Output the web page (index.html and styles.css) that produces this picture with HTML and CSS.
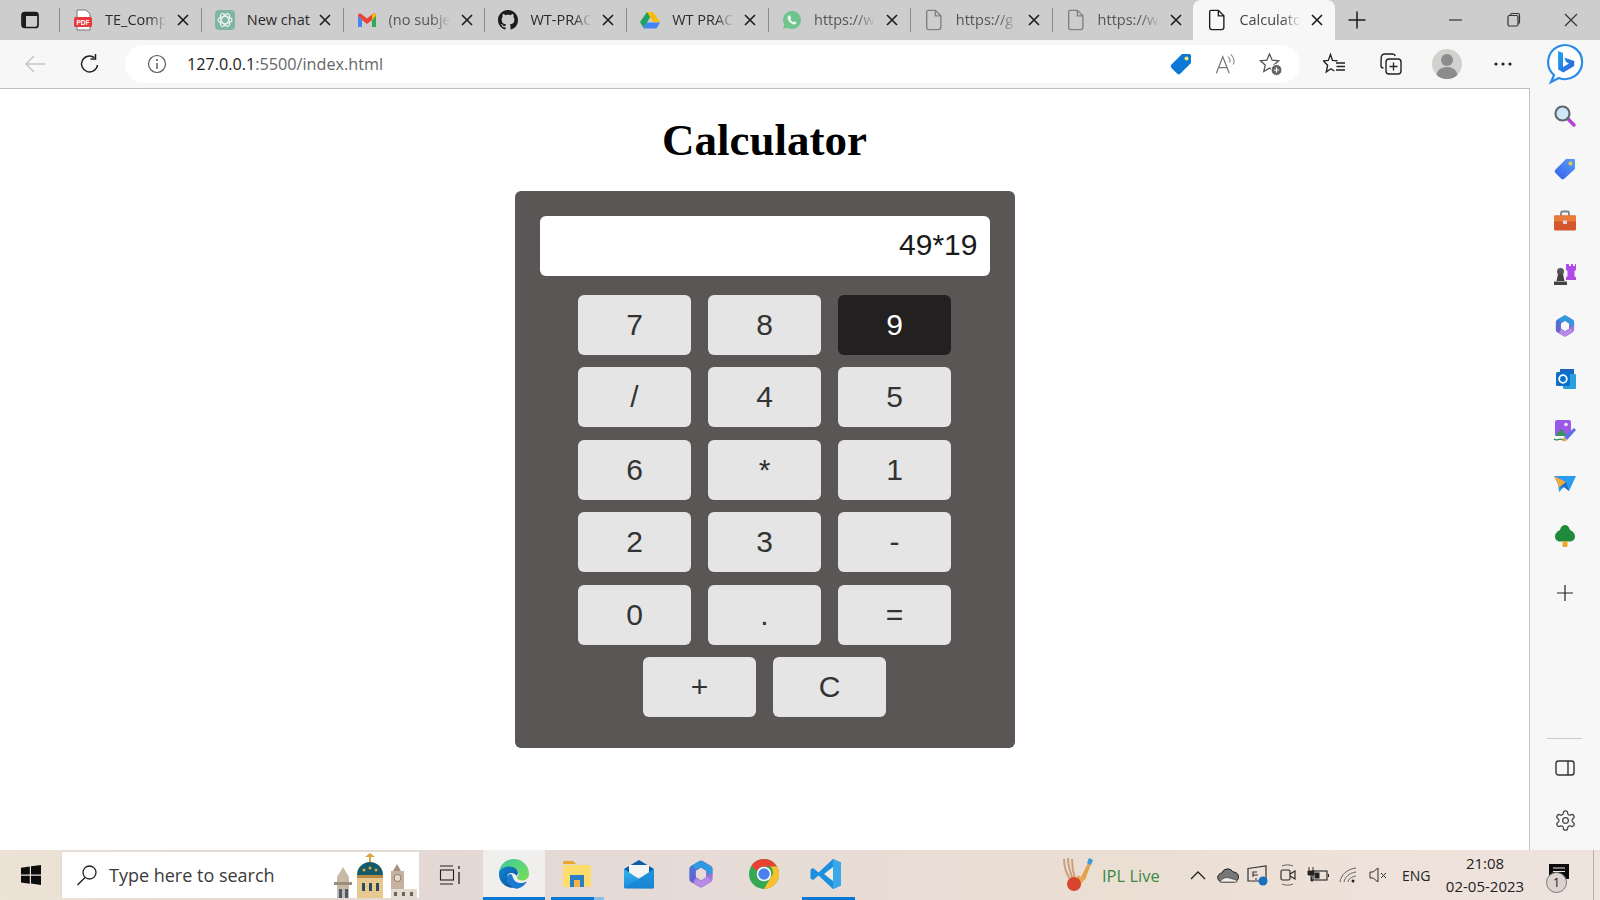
FILE: index.html
```html
<!DOCTYPE html>
<html lang="en">
<head>
<meta charset="utf-8">
<title>Calculator</title>
<link rel="stylesheet" href="styles.css">
</head>
<body>
<svg class="defs" width="0" height="0" aria-hidden="true">
  <defs>
    <symbol id="x" viewBox="0 0 14 14"><path d="M2 2l10 10M12 2L2 12" stroke="#1c1c1c" stroke-width="1.6" fill="none"/></symbol>
    <symbol id="doc" viewBox="0 0 20 24"><path d="M3.500 1.500h8l6 6v12.500a2.500 2.500 0 0 1-2.500 2.500H4.500a2.500 2.500 0 0 1-2.500-2.500V3a1.500 1.500 0 0 1 1.500-1.500zM11.500 1.500V7.500h6" fill="none" stroke="currentColor" stroke-width="1.500"/></symbol>
    <linearGradient id="edgeA" x1="0" y1="0" x2="1" y2="1"><stop offset="0" stop-color="#3bc9a0"/><stop offset="1" stop-color="#7dde55"/></linearGradient>
    <linearGradient id="edgeB" x1="0" y1="0" x2="1" y2="1"><stop offset="0" stop-color="#0f87d0"/><stop offset="1" stop-color="#0c4f9c"/></linearGradient>
    <linearGradient id="msA" gradientUnits="userSpaceOnUse" x1="4" y1="4" x2="26" y2="28"><stop offset="0" stop-color="#3d7fd8"/><stop offset=".5" stop-color="#6a5fd0"/><stop offset="1" stop-color="#c48ae0"/></linearGradient>
    <linearGradient id="bingA" x1="0" y1="0" x2="1" y2="1"><stop offset="0" stop-color="#22a5f0"/><stop offset="1" stop-color="#2b5fd8"/></linearGradient>
    <linearGradient id="tagA" x1="0" y1="1" x2="1" y2="0"><stop offset="0" stop-color="#3a5cf0"/><stop offset="1" stop-color="#55a0f5"/></linearGradient>
    <linearGradient id="mailA" x1="0" y1="0" x2="0" y2="1"><stop offset="0" stop-color="#35b4ee"/><stop offset="1" stop-color="#1a8ad8"/></linearGradient>
    <symbol id="ms365" viewBox="0 0 30 32"><path d="M15 5l9 5.500v11L15 27l-9-5.500v-11z" fill="none" stroke="url(#msA)" stroke-width="7" stroke-linejoin="round"/><path d="M8 9l7-4 9 5.500v5" fill="none" stroke="#2f9be0" stroke-width="6" stroke-linejoin="round"/><path d="M24 21.500L15 27l-7-4" fill="none" stroke="#b78ae6" stroke-width="6" stroke-linejoin="round"/></symbol>
  </defs>
</svg>
<div class="window">
  <header class="tabstrip">
    <div class="strip-start">
      <svg width="20" height="20" viewBox="0 0 20 20"><rect x="2" y="2.500" width="16" height="15" rx="2.500" fill="none" stroke="#1c1c1c" stroke-width="1.700"/><path d="M2.500 3h15v3h-15zM2.500 6h3.500v11h-3.500z" fill="#1c1c1c"/></svg>
    </div>
    <div class="tab">
      <svg class="favicon" width="20" height="22" viewBox="0 0 20 22"><path d="M4 1h9l4 4v16H4z" fill="#fff" stroke="#777" stroke-width="1"/><rect x="1" y="8" width="18" height="10" rx="1.500" fill="#e8393f"/><text x="10" y="16" class="pdf-label" text-anchor="middle">PDF</text></svg>
      <span class="title">TE_Comp</span><svg class="close" width="14" height="14"><use href="#x"/></svg>
    </div>
    <div class="tab">
      <svg class="favicon" width="20" height="22" viewBox="0 0 20 22"><rect x="0" y="1" width="20" height="20" rx="4" fill="#7fb5a2"/><g fill="none" stroke="#e8f3ef" stroke-width="1.200"><ellipse cx="10" cy="11" rx="7" ry="3.500"/><ellipse cx="10" cy="11" rx="7" ry="3.500" transform="rotate(60 10 11)"/><ellipse cx="10" cy="11" rx="7" ry="3.500" transform="rotate(120 10 11)"/></g></svg>
      <span class="title full">New chat</span><svg class="close" width="14" height="14"><use href="#x"/></svg>
    </div>
    <div class="tab">
      <svg class="favicon" width="20" height="22" viewBox="0 0 20 22"><path d="M1 6.500V18h4v-7z" fill="#4285f4"/><path d="M19 6.500V18h-4v-7z" fill="#34a853"/><path d="M1 6.500a2 2 0 0 1 3-1.800l6 4.800 6-4.800a2 2 0 0 1 3 1.800L15 11l-5 4-5-4z" fill="#ea4335"/><path d="M15 6l1-1.300a2 2 0 0 1 3 1.800L15 11z" fill="#fbbc04"/></svg>
      <span class="title muted">(no subje</span><svg class="close" width="14" height="14"><use href="#x"/></svg>
    </div>
    <div class="tab">
      <svg class="favicon" width="22" height="22" viewBox="0 0 16 16"><path fill="#1b1b1b" d="M8 0C3.580 0 0 3.580 0 8c0 3.540 2.290 6.530 5.470 7.590.4.070.55-.17.55-.38 0-.19-.01-.82-.01-1.490-2.010.37-2.530-.49-2.690-.94-.09-.23-.48-.94-.82-1.130-.28-.15-.68-.52-.01-.53.63-.01 1.080.58 1.230.82.72 1.210 1.870.87 2.330.66.070-.52.28-.87.51-1.070-1.780-.2-3.640-.89-3.640-3.950 0-.87.31-1.590.82-2.150-.08-.2-.36-1.020.08-2.120 0 0 .67-.21 2.200.82.64-.18 1.320-.27 2-.27.68 0 1.360.09 2 .27 1.530-1.040 2.200-.82 2.200-.82.44 1.100.16 1.920.08 2.120.51.56.82 1.270.82 2.150 0 3.070-1.870 3.750-3.650 3.950.29.25.54.73.54 1.480 0 1.070-.01 1.930-.01 2.200 0 .21.15.46.55.38A8.013 8.013 0 0 0 16 8c0-4.420-3.580-8-8-8z"/></svg>
      <span class="title">WT-PRAC</span><svg class="close" width="14" height="14"><use href="#x"/></svg>
    </div>
    <div class="tab">
      <svg class="favicon" width="20" height="22" viewBox="0 0 20 20"><path d="M7 2h6l-6.500 11.500L3.500 18 0 12z" fill="#1ea362"/><path d="M7 2h6l7 10h-7z" fill="#fbbc04"/><path d="M6.500 12.500H20L16.500 18.500h-13z" fill="#4285f4"/></svg>
      <span class="title">WT PRAC</span><svg class="close" width="14" height="14"><use href="#x"/></svg>
    </div>
    <div class="tab">
      <svg class="favicon" width="20" height="22" viewBox="0 0 20 20"><path d="M10 1a9 9 0 0 0-7.700 13.600L1 19l4.500-1.200A9 9 0 1 0 10 1z" fill="#6fc48c"/><path d="M7 5.500c-.7 0-1.500 1-1.500 2.300 0 2.600 3.300 6.300 6.500 6.700 1.300.1 2.500-1 2.500-2l-2.200-1.300-1 1c-1.300-.5-2.600-1.800-3-3l.9-1-1.100-2.700z" fill="#eef7f1"/></svg>
      <span class="title muted">https://w</span><svg class="close" width="14" height="14"><use href="#x"/></svg>
    </div>
    <div class="tab">
      <svg class="favicon page-icon" width="20" height="22"><use href="#doc"/></svg>
      <span class="title muted">https://g</span><svg class="close" width="14" height="14"><use href="#x"/></svg>
    </div>
    <div class="tab">
      <svg class="favicon page-icon" width="20" height="22"><use href="#doc"/></svg>
      <span class="title muted">https://w</span><svg class="close" width="14" height="14"><use href="#x"/></svg>
    </div>
    <div class="tab active">
      <svg class="favicon" width="20" height="22"><use href="#doc"/></svg>
      <span class="title">Calculato</span><svg class="close" width="14" height="14"><use href="#x"/></svg>
    </div>
    <div class="new-tab"><svg width="20" height="20" viewBox="0 0 20 20"><path d="M10 1.500v17M1.500 10h17" stroke="#1c1c1c" stroke-width="1.500"/></svg></div>
    <div class="win-controls">
      <div class="win-btn"><svg width="16" height="16" viewBox="0 0 16 16"><path d="M1 8h13" stroke="#333" stroke-width="1.200"/></svg></div>
      <div class="win-btn"><svg width="16" height="16" viewBox="0 0 16 16"><rect x="2" y="3.500" width="10" height="10.500" rx="1.500" fill="none" stroke="#333" stroke-width="1.200"/><path d="M4.500 3.500V3a1.500 1.500 0 0 1 1.500-1.500h6A1.500 1.500 0 0 1 13.500 3v7a1.500 1.500 0 0 1-1.500 1.500" fill="none" stroke="#333" stroke-width="1.200"/></svg></div>
      <div class="win-btn"><svg width="16" height="16" viewBox="0 0 16 16"><path d="M2 2l12 12M14 2L2 14" stroke="#333" stroke-width="1.200"/></svg></div>
    </div>
  </header>

  <nav class="toolbar">
    <div class="nav-btn back"><svg width="22" height="20" viewBox="0 0 22 20"><path d="M21 10H2M10 2l-8 8 8 8" fill="none" stroke="#c6c6c6" stroke-width="1.500"/></svg></div>
    <div class="nav-btn reload"><svg width="22" height="22" viewBox="0 0 22 22"><path d="M18.500 12a8 8 0 1 1-3-7.300" fill="none" stroke="#222" stroke-width="1.500"/><path d="M16.500 1v5h-5" fill="none" stroke="#222" stroke-width="1.500"/></svg></div>
    <div class="address">
      <svg class="info" width="20" height="20" viewBox="0 0 20 20"><circle cx="10" cy="10" r="8.500" fill="none" stroke="#555" stroke-width="1.200"/><path d="M10 9v6" stroke="#555" stroke-width="1.400"/><circle cx="10" cy="6" r="1" fill="#555"/></svg>
      <span class="url"><span class="host">127.0.0.1</span>:5500/index.html</span>
      <div class="addr-cell tag-cell"><svg width="24" height="24" viewBox="0 0 24 24"><path d="M13 2h7.500A1.500 1.500 0 0 1 22 3.500V11L11.500 21.500a2.500 2.500 0 0 1-3.500 0L2.500 16a2.500 2.500 0 0 1 0-3.500z" fill="#0a78d4"/><circle cx="17.500" cy="6.500" r="2" fill="#f2e86a"/></svg></div>
      <div class="addr-cell"><svg width="22" height="22" viewBox="0 0 24 24"><path d="M1.500 22L8.500 4l7 18M4 16h9" fill="none" stroke="#777" stroke-width="1.300"/><path d="M14 4c2 1.500 3 4 2 6.500M17 1.500c3.500 3 4.500 7 3 11" fill="none" stroke="#888" stroke-width="1.200"/></svg></div>
      <div class="addr-cell"><svg width="24" height="24" viewBox="0 0 24 24"><path d="M10.500 2l2.700 6.200 6.500.6-4.900 4.300 1.400 6.400-5.700-3.400-5.700 3.400 1.400-6.400L1.300 8.800l6.500-.6z" fill="none" stroke="#555" stroke-width="1.300"/><circle cx="17.500" cy="18" r="5.500" fill="#666" stroke="#fff" stroke-width="1"/><path d="M17.500 15.500v5M15 18h5" stroke="#fff" stroke-width="1.200"/></svg></div>
    </div>
    <div class="tool-cell"><svg width="24" height="24" viewBox="0 0 24 24"><path d="M14.500 8.700l-5-.3L7.500 2.500 5.300 8.400l-4.800.5 4.100 4.300-1.300 6.800 4.200-3M7.500 16.500l3.800 2.500" fill="none" stroke="#222" stroke-width="1.400"/><path d="M13 11h9M13.500 14.500h8.500M13 18h9" stroke="#222" stroke-width="1.300"/></svg></div>
    <div class="tool-cell"><svg width="24" height="24" viewBox="0 0 24 24"><rect x="7" y="7" width="15" height="15" rx="3" fill="none" stroke="#222" stroke-width="1.400"/><path d="M14.500 10.500v8M10.500 14.500h8" stroke="#222" stroke-width="1.300"/><path d="M4.500 16A2.500 2.500 0 0 1 2 13.500l.2-8A3.500 3.500 0 0 1 5.700 2h8.100a2.500 2.500 0 0 1 2.400 2" fill="none" stroke="#222" stroke-width="1.400"/></svg></div>
    <div class="tool-cell"><svg width="30" height="30" viewBox="0 0 30 30"><circle cx="15" cy="15" r="15" fill="#d3d1cd"/><circle cx="15" cy="11" r="6" fill="#8c8c8c"/><path d="M4.500 26c1-6 6-8 10.500-8s9.500 2 10.500 8A15 15 0 0 1 15 30a15 15 0 0 1-10.500-4z" fill="#8c8c8c"/></svg></div>
    <div class="tool-cell"><svg width="20" height="6" viewBox="0 0 20 6"><circle cx="3" cy="3" r="1.600" fill="#222"/><circle cx="10" cy="3" r="1.600" fill="#222"/><circle cx="17" cy="3" r="1.600" fill="#222"/></svg></div>
    <div class="bing"><svg width="40" height="42" viewBox="0 0 40 42"><path d="M9 32A17 17 0 1 1 14 35L6 39Q7.500 36 9 32Z" fill="#fff" stroke="#2a8be8" stroke-width="2.200"/><path d="M13 8l5 2v14l6-3.500-3-1.400-1.800-4.600 10 3.500v5l-11 6.500-5-3z" fill="url(#bingA)"/></svg></div>
  </nav>

  <div class="middle">
    <main class="content">
      <h1 class="heading">Calculator</h1>
      <section class="calculator">
        <div class="display">49*19</div>
        <div class="keys">
          <button class="key">7</button>
          <button class="key">8</button>
          <button class="key pressed">9</button>
          <button class="key">/</button>
          <button class="key">4</button>
          <button class="key">5</button>
          <button class="key">6</button>
          <button class="key">*</button>
          <button class="key">1</button>
          <button class="key">2</button>
          <button class="key">3</button>
          <button class="key">-</button>
          <button class="key">0</button>
          <button class="key">.</button>
          <button class="key">=</button>
          <button class="key">+</button>
          <button class="key">C</button>
        </div>
      </section>
    </main>
    <aside class="sidebar">
      <div class="side-item"><svg width="24" height="24" viewBox="0 0 24 24"><path d="M14 14l7 7" stroke="#b440d8" stroke-width="3.500" stroke-linecap="round"/><circle cx="9.500" cy="9.500" r="7" fill="#cfe6f5" stroke="#5f6a70" stroke-width="2.200"/></svg></div>
      <div class="side-item"><svg width="24" height="24" viewBox="0 0 24 24"><path d="M13 2h8a1 1 0 0 1 1 1v9L11.500 21.500a2.500 2.500 0 0 1-3.500 0L2.500 16a2.500 2.500 0 0 1 0-3.500z" fill="url(#tagA)"/><circle cx="17.500" cy="6.500" r="2" fill="#eac94a"/></svg></div>
      <div class="side-item"><svg width="24" height="22" viewBox="0 0 24 22"><path d="M8 6V3a1.500 1.500 0 0 1 1.500-1.500h5A1.500 1.500 0 0 1 16 3v3" fill="none" stroke="#7b8288" stroke-width="1.800"/><rect x="1" y="5.500" width="22" height="15" rx="1.500" fill="#d4562a"/><rect x="1" y="5.500" width="22" height="6" fill="#ea7a3a"/><rect x="10" y="10.500" width="4" height="3.500" fill="#d8d8d8"/></svg></div>
      <div class="side-item"><svg width="24" height="24" viewBox="0 0 24 24"><path d="M14 2h2v2h2V2h2v2h2V2h1v6l-1.500 1v5l1.500 1.500V18H13v-2.500L14.500 14V9L13 8V2z" fill="#b04ae8"/><circle cx="7.500" cy="9.500" r="3.500" fill="#555"/><path d="M5 12h5l1.500 7h-8zM1 19.500h13V23H1z" fill="#444"/></svg></div>
      <div class="side-item"><svg width="22" height="24"><use href="#ms365"/></svg></div>
      <div class="side-item"><svg width="22" height="24" viewBox="0 0 22 24"><rect x="6" y="2" width="14" height="7" fill="#1a66c0"/><rect x="9" y="7" width="13" height="15" rx="1" fill="#2aa0e0"/><rect x="2" y="5" width="14" height="14" rx="1.500" fill="#0b70c8"/><circle cx="9" cy="12" r="3.800" fill="none" stroke="#fff" stroke-width="1.800"/></svg></div>
      <div class="side-item"><svg width="24" height="24" viewBox="0 0 24 24"><rect x="2" y="1" width="16" height="16" rx="2" fill="#9a5ae8"/><circle cx="13" cy="5.500" r="1.800" fill="#f4e6fb"/><path d="M2 17l6-7 7 7z" fill="#3a9060"/><path d="M1 20c3 3 5-2 9 1" fill="none" stroke="#2f8f5a" stroke-width="1.300"/><path d="M11 18l10-9 2 2-9 10z" fill="#5a6fe8"/><path d="M10.500 18l3.500 3.500-4.500 1z" fill="#f0a030"/></svg></div>
      <div class="side-item"><svg width="24" height="20" viewBox="0 0 24 20"><path d="M1 2h22L16 17l-5-4-5 5-1-8z" fill="#2b9cf0"/><path d="M1 2l12 6-7 6L5 10z" fill="#f0a93a"/><path d="M13 8l-7 6 5-1 5 4z" fill="#1c70c8"/></svg></div>
      <div class="side-item"><svg width="22" height="24" viewBox="0 0 22 24"><path d="M11 1c3 0 4.500 3 5 5 2.500 1 5 3.500 5 6.500 0 3-2.500 5-5.500 5h-9C3.500 17.500 1 15.500 1 12.500 1 9.500 3.500 7 6 6c.5-2 2-5 5-5z" fill="#1e8a3a"/><rect x="8.500" y="17" width="5" height="6" rx="1" fill="#eba72c"/></svg></div>
      <div class="side-item add"><svg width="16" height="16" viewBox="0 0 16 16"><path d="M8 0v16M0 8h16" stroke="#222" stroke-width="1.200"/></svg></div>
      <div class="side-spacer"></div>
      <div class="side-divider"></div>
      <div class="side-item"><svg width="20" height="18" viewBox="0 0 20 18"><rect x="1" y="2" width="18" height="14" rx="2.500" fill="none" stroke="#333" stroke-width="1.400"/><path d="M13 2v14" stroke="#333" stroke-width="1.400"/></svg></div>
      <div class="side-item"><svg width="23" height="23" viewBox="0 0 24 24"><path d="M12.220 2h-.44a2 2 0 0 0-2 2v.18a2 2 0 0 1-1 1.730l-.43.25a2 2 0 0 1-2 0l-.15-.08a2 2 0 0 0-2.730.73l-.22.38a2 2 0 0 0 .73 2.730l.15.1a2 2 0 0 1 1 1.720v.51a2 2 0 0 1-1 1.740l-.15.09a2 2 0 0 0-.73 2.730l.22.38a2 2 0 0 0 2.730.73l.15-.08a2 2 0 0 1 2 0l.43.25a2 2 0 0 1 1 1.730V20a2 2 0 0 0 2 2h.44a2 2 0 0 0 2-2v-.18a2 2 0 0 1 1-1.730l.43-.25a2 2 0 0 1 2 0l.15.08a2 2 0 0 0 2.730-.73l.22-.39a2 2 0 0 0-.73-2.730l-.15-.08a2 2 0 0 1-1-1.740v-.5a2 2 0 0 1 1-1.740l.15-.09a2 2 0 0 0 .73-2.730l-.22-.38a2 2 0 0 0-2.730-.73l-.15.08a2 2 0 0 1-2 0l-.43-.25a2 2 0 0 1-1-1.730V4a2 2 0 0 0-2-2z" fill="none" stroke="#444" stroke-width="1.300"/><circle cx="12" cy="12" r="3" fill="none" stroke="#444" stroke-width="1.300"/></svg></div>
    </aside>
  </div>

  <footer class="taskbar">
    <div class="start"><svg width="20" height="20" viewBox="0 0 20 20"><path d="M0 2.800l8.800-1.300v8H0zM10 1.300L20 0v9.500H10zM0 10.700h8.800v8L0 17.400zM10 10.700h10V20l-10-1.400z" fill="#0c0c0c"/></svg></div>
    <div class="search">
      <svg width="22" height="22" viewBox="0 0 22 22"><circle cx="13.500" cy="8.500" r="6.500" fill="none" stroke="#222" stroke-width="1.300"/><path d="M9 13.500L1.500 21" stroke="#222" stroke-width="1.400"/></svg>
      <span class="search-text">Type here to search</span>
      <svg class="city" width="88" height="47" viewBox="0 0 88 47"><path d="M6 26l6-10 6 10v21H6z" fill="#c9b9a7"/><rect x="3" y="31" width="18" height="3" fill="#9c8d7d"/><rect x="8" y="38" width="3" height="9" fill="#4a5a70"/><rect x="14" y="38" width="3" height="9" fill="#4a5a70"/><path d="M26 24a13 13 0 0 1 26 0z" fill="#145a68"/><path d="M39 2l-5 4h4v5h2V6h4z" fill="#d6a83e"/><circle cx="33" cy="19" r="1.500" fill="#d6a83e"/><circle cx="39" cy="17" r="1.500" fill="#d6a83e"/><circle cx="45" cy="19" r="1.500" fill="#d6a83e"/><rect x="26" y="24" width="26" height="23" fill="#e7c88e"/><rect x="26" y="24" width="26" height="3" fill="#b78a44"/><rect x="31" y="32" width="3" height="8" fill="#2f4c5c"/><rect x="38" y="32" width="3" height="8" fill="#2f4c5c"/><rect x="45" y="32" width="3" height="8" fill="#2f4c5c"/><rect x="60" y="20" width="13" height="27" fill="#c8b19e"/><path d="M62 20l4-7 4 7z" fill="#a7907e"/><circle cx="66.500" cy="27" r="3.500" fill="#e7dccd" stroke="#8b7a6a"/><rect x="60" y="38" width="26" height="9" fill="#e3dbd0"/><rect x="63" y="41" width="3" height="4" fill="#6c6258"/><rect x="71" y="41" width="3" height="4" fill="#6c6258"/><rect x="79" y="41" width="3" height="4" fill="#6c6258"/></svg>
    </div>
    <div class="task-view"><svg width="22" height="22" viewBox="0 0 22 22"><path d="M1 2h13M1 20h13" stroke="#222" stroke-width="1.100"/><rect x="1.500" y="6" width="13" height="10" fill="none" stroke="#222" stroke-width="1.100"/><path d="M20 2v3M20 8v12" stroke="#222" stroke-width="1.300"/></svg></div>
    <div class="task-app current"><svg width="32" height="32" viewBox="0 0 32 32"><path d="M16 1a15 15 0 0 1 15 15c0 4-3 6.500-6.500 6.500-3 0-5.500-1-5.500-3 0-1.500 1.500-1 1.500-3.500C20.500 12 16.500 9.500 12 9.500 7 9.500 3 12 1.300 13 2.500 6 8.500 1 16 1z" fill="url(#edgeA)"/><path d="M1.300 13c2-2.500 6-4.500 10-4.500 5 0 8.700 3 8.700 6.500 0 1-1 1.500-1 3-1-.5-2-3-6-3-3 0-4 3-4 5 0 4 3.500 8 8 9.800C7.500 30.500 1 24 1 16c0-1 .1-2 .3-3z" fill="url(#edgeB)"/><path d="M13 16c-3 0-4.500 3-4 5.500.5 4 4.500 8 9 9.300 5-.5 9-3.500 11-7.500-3 2-8 2.500-11 .5-3-2-3-6-5-7.800z" fill="#1a7ad0"/></svg></div>
    <div class="task-app running"><svg width="30" height="28" viewBox="0 0 30 28"><path d="M1 3a2 2 0 0 1 2-2h8l3 3H1z" fill="#e6a72a"/><rect x="1" y="5" width="28" height="22" rx="1.500" fill="#fbdc6c"/><path d="M8 27V15h14v12h-4v-7h-6v7z" fill="#2a7ec8"/><rect x="12" y="20" width="6" height="7" fill="#f3b54a"/></svg></div>
    <div class="task-app"><svg width="32" height="30" viewBox="0 0 32 30"><path d="M1 10L16 1l15 9v5H1z" fill="#0a5ea8"/><path d="M6 6h20v12H6z" fill="#f5f5f5"/><path d="M1 10l15 10 15-10v18a1.500 1.500 0 0 1-1.500 1.500h-27A1.500 1.500 0 0 1 1 28z" fill="url(#mailA)"/><path d="M1 29l30-19v18a1.500 1.500 0 0 1-1.500 1.500z" fill="#1680d0" opacity=".6"/></svg></div>
    <div class="task-app"><svg width="28" height="30"><use href="#ms365"/></svg></div>
    <div class="task-app"><svg width="32" height="32" viewBox="0 0 32 32"><circle cx="16" cy="16" r="15" fill="#35a853"/><path d="M16 1a15 15 0 0 1 13 7.500H16a7.500 7.500 0 0 0-7 4.800L3.500 7.500A15 15 0 0 1 16 1z" fill="#e94235"/><path d="M29 8.500A15 15 0 0 1 16 31l6.500-11.200A7.500 7.500 0 0 0 22.500 8.500z" fill="#fbc02d"/><circle cx="16" cy="16" r="7.300" fill="#fff"/><circle cx="16" cy="16" r="5.700" fill="#4a80ee"/></svg></div>
    <div class="task-app running-vs"><svg width="32" height="32" viewBox="0 0 32 32"><path d="M23 1l8 3.500v23L23 31 8.500 17.500 3 22l-2.500-1.500v-9L3 10l5.500 4.500z" fill="#1b8fe0"/><path d="M23 9l-9 7 9 7z" fill="#f3eadf"/><path d="M23 1l8 3.500v23L23 31z" fill="#39a8ea"/></svg></div>
    <div class="tray">
      <div class="news"><svg width="34" height="36" viewBox="0 0 34 36"><path d="M4 2c0 8 3 16 7 22M8 1c0 8 2 14 5 22M12 2c0 7 1 13 3 20" fill="none" stroke="#c9a078" stroke-width="2"/><path d="M30 2l-9 18 4 3 7-19z" fill="#e3a04c"/><path d="M29 1l4 2-2 5-4-2z" fill="#3a9ad8"/><path d="M18 18l7 4-6 8-6-3z" fill="#e8a858"/><circle cx="14" cy="27" r="7" fill="#d8452e"/></svg></div>
      <span class="news-text">IPL Live</span>
      <div class="tray-cell"><svg width="16" height="10" viewBox="0 0 16 10"><path d="M1 9l7-7 7 7" fill="none" stroke="#222" stroke-width="1.300"/></svg></div>
      <div class="tray-cell"><svg width="22" height="16" viewBox="0 0 22 16"><path d="M5.500 15a4.500 4.500 0 0 1-.5-9 6 6 0 0 1 11-1 5 5 0 0 1 1 10z" fill="#777" stroke="#222" stroke-width="1"/><path d="M3 15c2-4 6-5 9-4s6 1 8 3v1z" fill="#eee" stroke="#333" stroke-width=".6"/></svg></div>
      <div class="tray-cell"><svg width="22" height="22" viewBox="0 0 22 22"><path d="M1 4.500L19 2v15H1z" fill="none" stroke="#333" stroke-width="1.200"/><path d="M6 11h5M10 8H6v5M10 15h-2" stroke="#333" stroke-width="1.100" fill="none"/><circle cx="16" cy="17" r="4.500" fill="#1b6fc0"/></svg></div>
      <div class="tray-cell"><svg width="16" height="22" viewBox="0 0 16 22"><path d="M2 2c3-1.500 8-1.500 11 0M2 20c3 1.500 8 1.500 11 0" fill="none" stroke="#555" stroke-width=".9"/><rect x="1" y="6" width="9" height="10" rx="1.500" fill="none" stroke="#222" stroke-width="1.100"/><path d="M10 10l5-3v8l-5-3" fill="none" stroke="#222" stroke-width="1.100"/></svg></div>
      <div class="tray-cell"><svg width="22" height="16" viewBox="0 0 22 16"><path d="M2 0v4M6 0v4M1 4h6v4H1zM4 8v6h2" fill="#222" stroke="#222" stroke-width=".9"/><rect x="6" y="4" width="14" height="9" fill="none" stroke="#222" stroke-width="1.100"/><rect x="7.500" y="5.500" width="5" height="6" fill="#222"/><path d="M21.500 7v3" stroke="#222"/></svg></div>
      <div class="tray-cell"><svg width="18" height="16" viewBox="0 0 18 16"><path d="M1 15C2 8 8 2 17 1M5 15c1-5 5-9 12-10M9 15c.5-3 3-5 8-6" fill="none" stroke="#555" stroke-width=".9"/><circle cx="14" cy="14" r="1.500" fill="#222"/></svg></div>
      <div class="tray-cell"><svg width="18" height="16" viewBox="0 0 18 16"><path d="M1 5h3l5-4v14l-5-4H1z" fill="none" stroke="#333" stroke-width="1"/><path d="M12 6l5 5M17 6l-5 5" stroke="#333" stroke-width="1"/></svg></div>
      <span class="lang">ENG</span>
      <div class="clock"><span class="clock-line">21:08</span><span class="clock-line">02-05-2023</span></div>
      <div class="notify">
        <svg width="22" height="24" viewBox="0 0 22 24"><path d="M1 1h20v15H10l-4 5v-5H1z" fill="#0c0c0c"/><path d="M5 5h12M5 8.500h12M5 12h8" stroke="#f1e4e0" stroke-width="1.100"/></svg>
        <span class="badge">1</span>
      </div>
      <div class="desktop-edge"></div>
    </div>
  </footer>
</div>
</body>
</html>
```
FILE: styles.css
```css
* { box-sizing: border-box; }
html, body { margin: 0; padding: 0; height: 100%; overflow: hidden; }
body { font-family: "Open Sans", "Liberation Sans", sans-serif; background: #fff; }
.defs { position: absolute; }
svg { display: block; flex: none; }

.window { width: 1600px; height: 900px; display: flex; flex-direction: column; }

/* tab strip */
.tabstrip { height: 40px; background: #cdcdcd; display: flex; align-items: stretch; flex: none; }
.strip-start { width: 59px; display: flex; align-items: center; padding-left: 20px; }
.tab { width: 141.8px; position: relative; display: flex; align-items: center; padding-left: 14px; font-size: 14.5px; color: #2a2a2a; }
.tab::before { content: ""; position: absolute; left: 0; top: 8px; height: 24px; width: 1px; background: #8b8b8b; }
.favicon { width: 20px; margin-right: 12px; }
.page-icon { color: #808080; }
.pdf-label { font: bold 6.5px "Liberation Sans", sans-serif; fill: #fff; }
.title { width: 64px; padding-bottom: 2px; white-space: nowrap; -webkit-mask-image: linear-gradient(90deg, #000 68%, transparent 96%); mask-image: linear-gradient(90deg, #000 68%, transparent 96%); }
.title.full { -webkit-mask-image: none; mask-image: none; }
.title.muted { color: #555; }
.close { margin-left: 7px; }
.tab.active { width: 142px; background: #f7f7f7; border-radius: 8px 8px 0 0; color: #1c1c1c; }
.tab.active::before { display: none; }
.tab.active .title { color: #444; }
.new-tab { width: 44px; display: flex; align-items: center; justify-content: center; }
.win-controls { margin-left: auto; display: flex; }
.win-btn { width: 57.5px; display: flex; align-items: center; justify-content: center; }

/* toolbar */
.toolbar { height: 48px; background: #f7f7f7; display: flex; align-items: center; flex: none; }
.nav-btn { display: flex; align-items: center; justify-content: center; height: 100%; }
.back { width: 70px; }
.reload { width: 40px; }
.address { width: 1175px; height: 38px; margin: 0 7px 0 15px; background: #fff; border-radius: 19px; display: flex; align-items: center; padding: 0 7px 0 22px; }
.info { margin-right: 20px; }
.url { font-size: 16.2px; color: #666; white-space: nowrap; }
.host { color: #1c1c1c; }
.addr-cell { width: 45px; display: flex; justify-content: center; align-items: center; }
.tag-cell { margin-left: auto; }
.tool-cell { width: 56px; display: flex; justify-content: center; align-items: center; }
.bing { margin-left: 14px; width: 40px; }

/* page body */
.middle { flex: 1; display: flex; min-height: 0; }
.content { flex: 1; border-top: 1px solid #bdbdbd; background: #fff; padding-top: 21px; }
.heading { margin: 0 0 21px; height: 60px; text-align: center; font: bold 45px/60px "Liberation Serif", serif; color: #000; }
.calculator { width: 500px; margin: 0 auto; height: 557px; padding: 25px; background: #5a5655; border-radius: 6px; }
.display { height: 60px; background: #fff; border-radius: 6px; text-align: right; padding-right: 12px; font: 30px/58px "Liberation Sans", sans-serif; color: #1a1a1a; margin-bottom: 19px; }
.keys { width: 373px; margin: 0 auto; display: flex; flex-wrap: wrap; justify-content: center; gap: 12.4px 17px; }
.key { width: 113px; height: 60px; border: none; padding: 0; background: #e5e5e5; color: #333; border-radius: 6px; font: 30px "Liberation Sans", sans-serif; }
.key.pressed { background: #222020; color: #fff; }

/* sidebar */
.sidebar { width: 71px; background: #f7f7f7; border-left: 1px solid #c4c4c4; display: flex; flex-direction: column; padding: 2px 0 3px; flex: none; }
.side-item { height: 52.5px; display: flex; align-items: center; justify-content: center; flex: none; }
.side-item.add { margin-top: 4px; }
.side-spacer { flex: 1; }
.side-divider { width: 35px; height: 1px; background: #c8c8c8; margin: 0 0 3px 17px; }

/* taskbar */
.taskbar { height: 50px; flex: none; display: flex; align-items: stretch; background: linear-gradient(90deg, #ece3d6 0, #e7dccf 12%, #e3d8d4 28%, #e6dbd6 45%, #ebdfd4 70%, #efe3de 100%); }
.start { width: 61px; display: flex; align-items: center; justify-content: center; }
.search { width: 359px; margin: 1px 0 2px; background: #fff; display: flex; align-items: center; padding-left: 14px; border: 1px solid #dfdcd8; border-bottom: none; }
.search-text { margin-left: 11px; font-size: 18px; color: #3a3a3a; white-space: nowrap; }
.city { margin-left: auto; align-self: flex-end; }
.task-view { width: 63px; display: flex; align-items: center; justify-content: center; padding-right: 3px; }
.task-app { width: 62.4px; display: flex; align-items: center; justify-content: center; border-bottom: 3px solid transparent; }
.task-app.current { background: #f1eeee; border-bottom-color: #0a78d4; }
.task-app.running { border-image: linear-gradient(90deg, transparent 0, transparent 11%, #0a78d4 11%, #0a78d4 77%, #8fbfe6 77%, #8fbfe6 92%, transparent 92%) 1; }
.task-app.running-vs { border-image: linear-gradient(90deg, transparent 0, transparent 13%, #0a78d4 13%, #0a78d4 95%, transparent 95%) 1; }
.tray { margin-left: auto; display: flex; align-items: center; }
.news { width: 34px; }
.news-text { font-size: 16.5px; color: #3a8a3f; margin-left: 8px; width: 81px; white-space: nowrap; }
.tray-cell { width: 30px; display: flex; justify-content: center; align-items: center; }
.lang { font-size: 14px; color: #222; margin-left: 9px; width: 37px; white-space: nowrap; }
.clock { width: 92px; display: flex; flex-direction: column; align-items: center; font-size: 15px; line-height: 23px; color: #222; white-space: nowrap; }
.clock-line { display: block; }
.notify { width: 43px; position: relative; display: flex; justify-content: center; padding-left: 13px; margin-right: 19px; }
.badge { position: absolute; left: 15px; top: 9px; width: 21px; height: 21px; border-radius: 50%; background: #dcd3cf; border: 1px solid #777; font-size: 13px; line-height: 19px; text-align: center; color: #222; }
.desktop-edge { width: 7px; align-self: stretch; border-left: 1px solid #b9b1ad; }
```
